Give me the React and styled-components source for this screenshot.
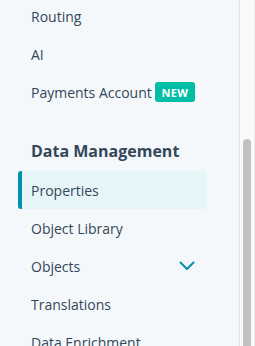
import React from "react";
import styled, { createGlobalStyle } from "styled-components";

const Global = createGlobalStyle`
  html, body { margin: 0; padding: 0; }
  body {
    width: 255px;
    height: 346px;
    overflow: hidden;
    background: #f5f8fa;
    font-family: "Open Sans", "Liberation Sans", sans-serif;
  }
`;

const Frame = styled.div`
  display: flex;
  width: 255px;
  height: 346px;
  overflow: hidden;
`;

const Nav = styled.nav`
  width: 239px;
  height: 346px;
  border-right: 1px solid #dfe3eb;
  background: #f5f8fa;
  overflow: hidden;
  flex-shrink: 0;
`;

const List = styled.div`
  display: flex;
  flex-direction: column;
  margin-top: -3px;
  padding-left: 18px;
`;

const Item = styled.div`
  display: flex;
  align-items: center;
  gap: 3px;
  width: 189px;
  height: 38px;
  box-sizing: border-box;
  padding-left: ${(p) => (p.$active ? "9px" : "13px")};
  padding-right: 12px;
  font-size: 14px;
  color: #33475b;
  background: ${(p) => (p.$active ? "#e5f5f8" : "transparent")};
  border-left: ${(p) => (p.$active ? "4px solid #0091ae" : "none")};
  border-radius: ${(p) => (p.$active ? "3px" : "0")};
  justify-content: ${(p) => (p.$split ? "space-between" : "flex-start")};
`;

const Header = styled.div`
  display: flex;
  align-items: center;
  height: 24px;
  margin-top: 28px;
  margin-bottom: 8px;
  padding-left: 13px;
  font-size: 16px;
  font-weight: 700;
  color: #33475b;
`;

const Badge = styled.span`
  display: inline-flex;
  align-items: center;
  justify-content: center;
  width: 40px;
  height: 20px;
  border-radius: 3px;
  background: #00bda5;
  color: #ffffff;
  font-size: 11px;
  font-weight: 700;
  letter-spacing: 0.3px;
`;

const Track = styled.div`
  width: 15px;
  height: 346px;
  background: #fafafa;
  border-right: 1px solid #ececec;
  box-sizing: border-box;
  padding-top: 139px;
  padding-left: 3px;
`;

const Thumb = styled.div`
  width: 8px;
  height: 220px;
  background: #c1c1c1;
  border-radius: 4px;
`;

const Chevron = () => (
  <svg width="16" height="10" viewBox="0 0 16 10" style={{ marginRight: 0 }}>
    <path d="M1.5 1.5 L8 8 L14.5 1.5" fill="none" stroke="#0091ae" strokeWidth="2" strokeLinecap="round" strokeLinejoin="round" />
  </svg>
);

export default function App() {
  return (
    <>
      <Global />
      <Frame>
        <Nav>
          <List>
            <Item>Routing</Item>
            <Item>AI</Item>
            <Item>
              Payments Account<Badge>NEW</Badge>
            </Item>
            <Header>Data Management</Header>
            <Item $active>Properties</Item>
            <Item>Object Library</Item>
            <Item $split>
              Objects
              <Chevron />
            </Item>
            <Item>Translations</Item>
            <Item>Data Enrichment</Item>
          </List>
        </Nav>
        <Track>
          <Thumb />
        </Track>
      </Frame>
    </>
  );
}
